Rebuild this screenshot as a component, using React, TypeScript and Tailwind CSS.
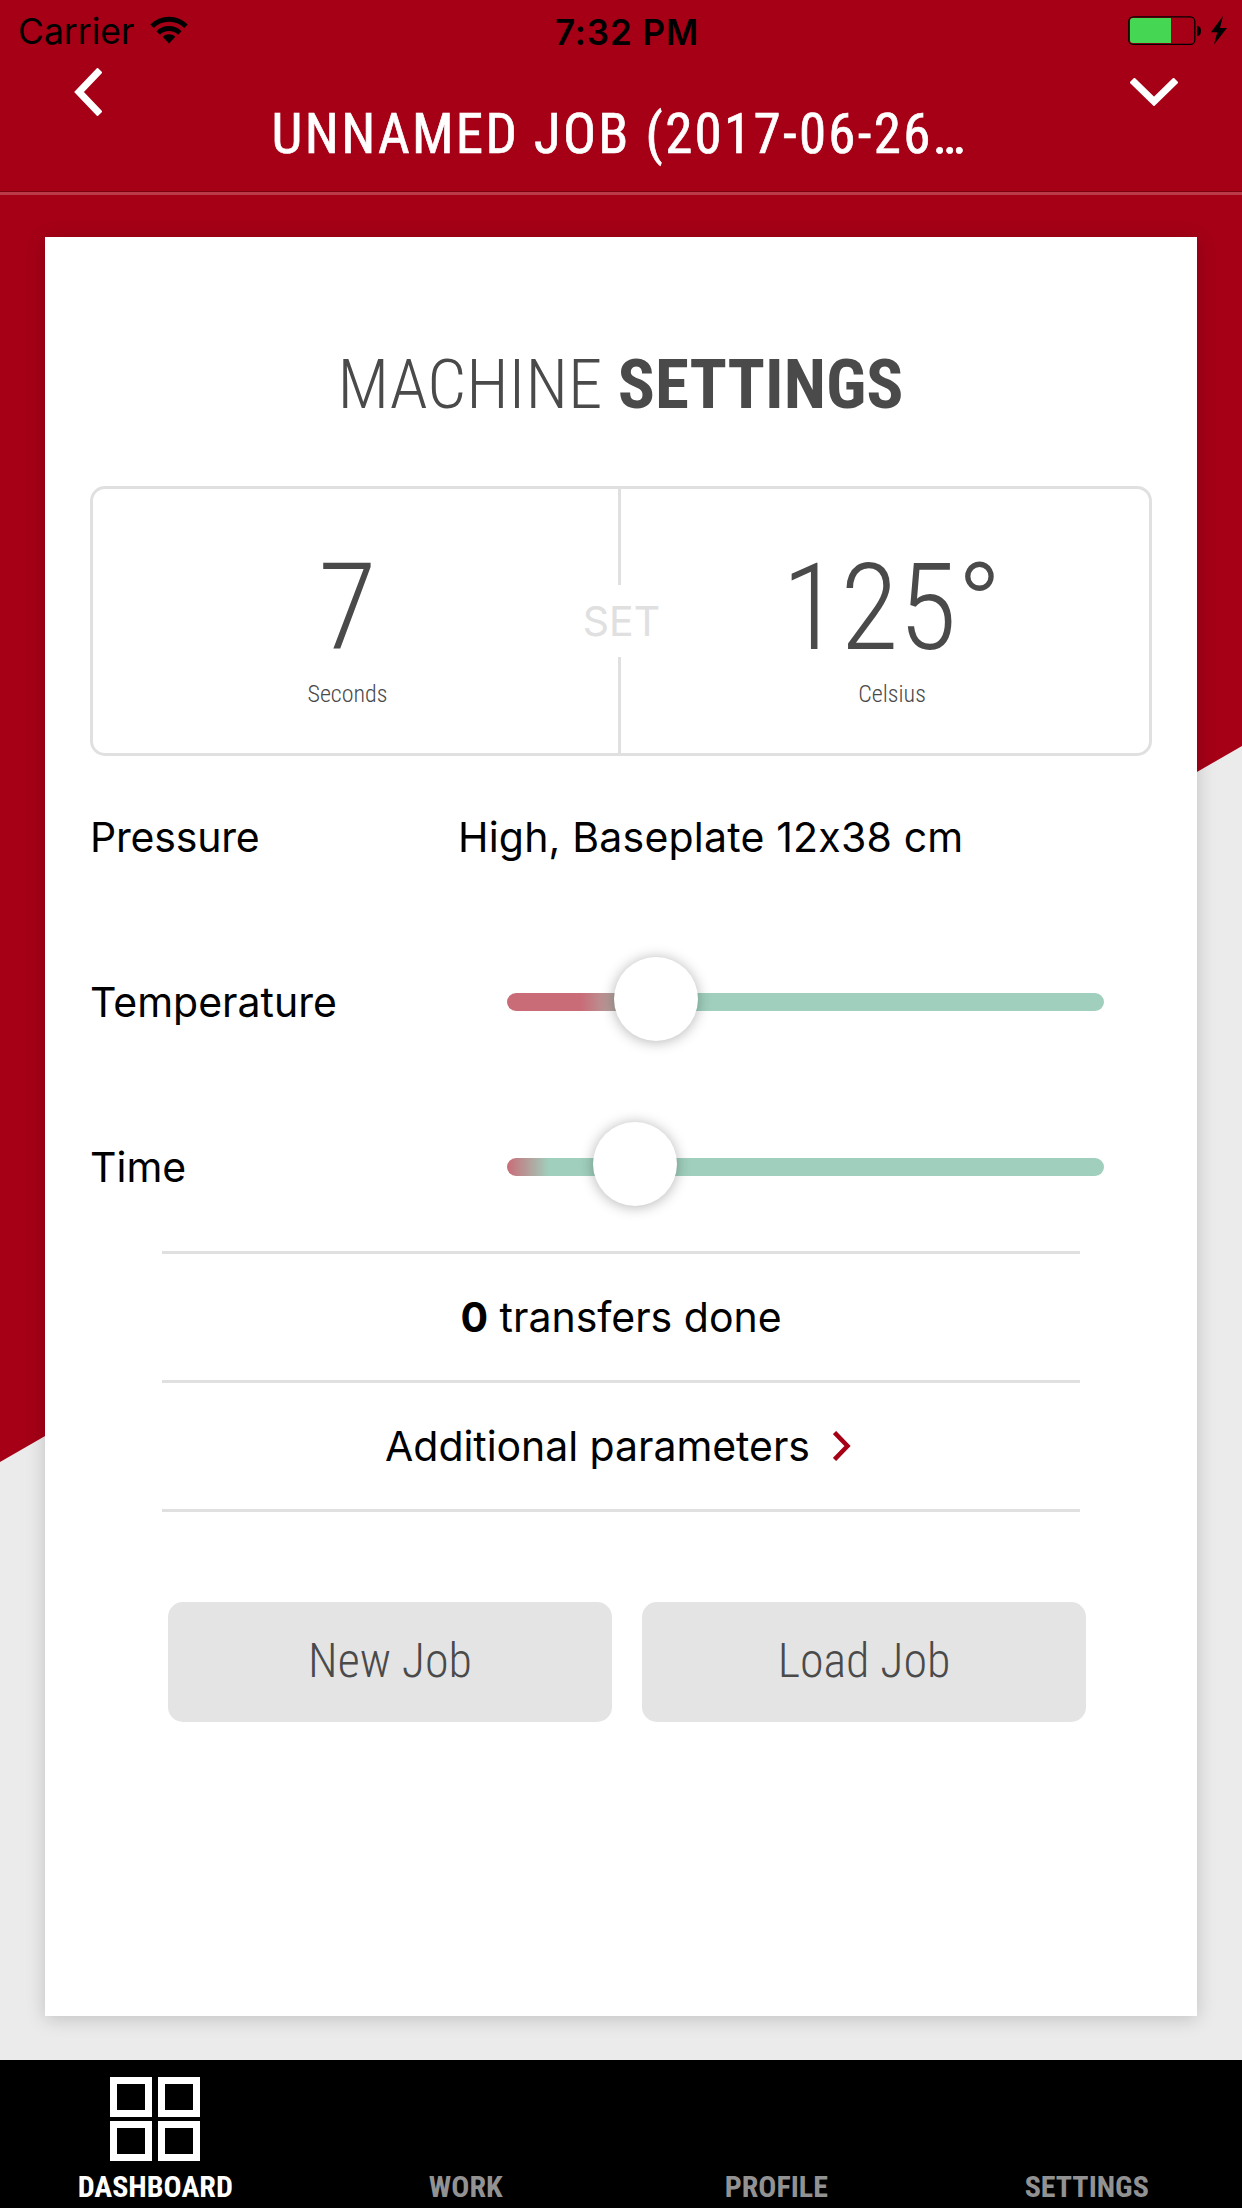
import React from 'react';

interface SliderRowProps {
  label: string;
  // centre of the knob, in px from the left end of the track
  value: number;
  trackClass: string;
  className?: string;
}

const tabs = [
  { name: 'DASHBOARD', active: true },
  { name: 'WORK', active: false },
  { name: 'PROFILE', active: false },
  { name: 'SETTINGS', active: false },
];

const StatusBar: React.FC = () => (
  <div className="flex h-[60px] items-start justify-between pl-[18px] pr-[14px] pt-4 text-black">
    <div className="flex w-[400px] items-start">
      <span className="w-[132px] text-[35.5px] leading-[32px]">Carrier</span>
      <svg width="38" height="28" viewBox="0 0 38 28" fill="none" stroke="currentColor" strokeWidth="5">
        <path d="M2 10.2A24 24 0 0 1 36 10.2" />
        <path d="M8.2 17A15.5 15.5 0 0 1 29.8 17" />
        <path d="M19 27.5L12.6 20.8A9.5 9.5 0 0 1 25.4 20.8Z" fill="currentColor" stroke="none" />
      </svg>
    </div>
    <span className="pl-[8px] text-[35px] font-semibold leading-[32px] tracking-[0.9px]">7:32 PM</span>
    <div className="flex w-[400px] justify-end">
      <svg width="100" height="30" viewBox="0 0 100 30">
        <rect x="0.8" y="0.8" width="66" height="27.6" rx="4.5" fill="none" stroke="#000" strokeWidth="1.3" />
        <path d="M5 2H43V27H5Q2 27 2 24V5Q2 2 5 2Z" fill="#45d654" />
        <path d="M69 10Q73 10 73 15T69 20Z" fill="#000" />
        <path d="M95 0L83 16.2H89.3L86 28.5L99 12H92Z" fill="#000" />
      </svg>
    </div>
  </div>
);

const SliderRow: React.FC<SliderRowProps> = ({ label, value, trackClass, className }) => (
  <div className={`flex items-center ${className}`}>
    <span className="w-[417px] pt-[2px] text-[41px]">{label}</span>
    <div className={`relative h-[18px] w-[597px] rounded-full ${trackClass}`}>
      <div
        className="absolute -top-9 size-[84px] -translate-x-1/2 rounded-full bg-white shadow-[0_1px_14px_rgba(0,0,0,0.3)]"
        style={{ left: value }}
      />
    </div>
  </div>
);

const Reading: React.FC<{ value: string; unit: string; className?: string }> = ({ value, unit, className }) => (
  <div className={`flex flex-col items-center pt-[47px] font-['Roboto'] font-light text-[#4a4a4a] [font-stretch:75%] ${className}`}>
    <span className="text-[120px] leading-[144px]">{value}</span>
    <span className="mt-[-1px] text-[24px] leading-[30px]">{unit}</span>
  </div>
);

const App: React.FC = () => {
  return (
    <div className="relative isolate flex h-[2208px] w-[1242px] flex-col overflow-hidden bg-[#ebebeb] font-['Inter',sans-serif] text-black">
      <div className="absolute inset-0 -z-10 bg-[#a50016] [clip-path:polygon(0_0,100%_0,100%_746px,0_1462px)]" />

      <header className="flex h-[195px] flex-col">
        <StatusBar />
        <div className="flex h-[131px] items-start justify-between pl-[74px] pr-16">
          <svg className="mt-2" width="28" height="48" viewBox="0 0 28 48" fill="none" stroke="#fff" strokeWidth="7">
            <path d="M26 2L5 24L26 46" />
          </svg>
          <h1 className="ml-[7px] mt-[42px] font-['Roboto'] text-[55px] leading-[64px] tracking-[2.3px] text-white [-webkit-text-stroke:0.7px_#fff] [font-stretch:75%]">
            UNNAMED JOB (2017-06-26…
          </h1>
          <svg className="mt-[18px]" width="48" height="28" viewBox="0 0 48 28" fill="none" stroke="#fff" strokeWidth="7">
            <path d="M2 2L24 23.5L46 2" />
          </svg>
        </div>
        <div className="h-1 border-t border-[#7d0011] bg-[#bb3a4a]" />
      </header>

      <main className="flex-1 px-[45px] pb-11 pt-[42px]">
        <section className="h-full bg-white px-[45px] pt-[108px] shadow-[0_3px_18px_rgba(0,0,0,0.18)]">
          <h2 className="pr-px text-center font-['Roboto'] text-[69px] font-light leading-[80px] text-[#4a4a4a] [font-stretch:75%]">
            MACHINE <b className="font-bold">SETTINGS</b>
          </h2>

          <div className="relative mt-[61px] flex h-[270px] rounded-[15px] border-[3px] border-[#e0e0e0]">
            <Reading value="7" unit="Seconds" className="w-[525px] pr-4" />
            <div className="w-[3px] bg-[#e0e0e0]" />
            <Reading value="125°" unit="Celsius" className="flex-1 pl-[14px]" />
            <div className="absolute left-[484px] top-24 flex h-[72px] w-[89px] items-center justify-center bg-white pt-[2px] text-[41px] text-[#e0e0e0]">
              SET
            </div>
          </div>

          <div className="flex h-[162px] items-center pt-[2px] text-[41px]">
            <span className="w-[368px] tracking-[-0.2px]">Pressure</span>
            <span className="tracking-[0.2px]">High, Baseplate 12x38 cm</span>
          </div>
          <SliderRow
            label="Temperature"
            value={149}
            className="h-[168px]"
            trackClass="bg-[linear-gradient(90deg,#c96c77_74px,#a0cfbd_134px)]"
          />
          <SliderRow
            label="Time"
            value={128}
            className="h-[162px]"
            trackClass="bg-[linear-gradient(90deg,#c96c77_0px,#a0cfbd_42px)]"
          />

          <div className="mx-[72px] mt-[3px] border-b-[3px] border-[#e0e0e0] text-[41px]">
            <div className="flex h-[129px] items-center justify-center border-t-[3px] border-[#e0e0e0] pt-[2px]">
              <p><b className="font-bold">0</b> transfers done</p>
            </div>
            <div className="flex h-[129px] items-center justify-center gap-[23px] border-t-[3px] border-[#e0e0e0] pr-[6px]">
              <span className="pt-[2px] tracking-[-0.05px]">Additional parameters</span>
              <svg width="18" height="30" viewBox="0 0 18 30" fill="none" stroke="#a50016" strokeWidth="4.5">
                <path d="M1.5 1.5L14.5 15L1.5 28.5" />
              </svg>
            </div>
          </div>

          <div className="ml-[78px] mt-[90px] flex gap-[30px] font-['Roboto'] text-[48px] font-light text-[#4a4a4a] [font-stretch:75%]">
            <button className="h-[120px] w-[444px] rounded-[15px] bg-[#e4e4e4] pb-[2px]">New Job</button>
            <button className="h-[120px] w-[444px] rounded-[15px] bg-[#e4e4e4] pb-[2px]">Load Job</button>
          </div>
        </section>
      </main>

      <nav className="grid h-[148px] grid-cols-4 bg-black">
        {tabs.map((tab) => (
          <div
            key={tab.name}
            className={`flex flex-col items-center justify-end pb-[3px] font-['Roboto'] text-[30px] font-bold leading-[36px] [font-stretch:75%] ${tab.active ? 'text-white' : 'text-[#929292]'}`}
          >
            {tab.active && (
              <div className="mb-2 grid grid-cols-2 gap-x-[6px] gap-y-1">
                <i className="h-10 w-[42px] border-[7px] border-white" />
                <i className="h-10 w-[42px] border-[7px] border-white" />
                <i className="h-10 w-[42px] border-[7px] border-white" />
                <i className="h-10 w-[42px] border-[7px] border-white" />
              </div>
            )}
            <span>{tab.name}</span>
          </div>
        ))}
      </nav>
    </div>
  );
};

export default App;
